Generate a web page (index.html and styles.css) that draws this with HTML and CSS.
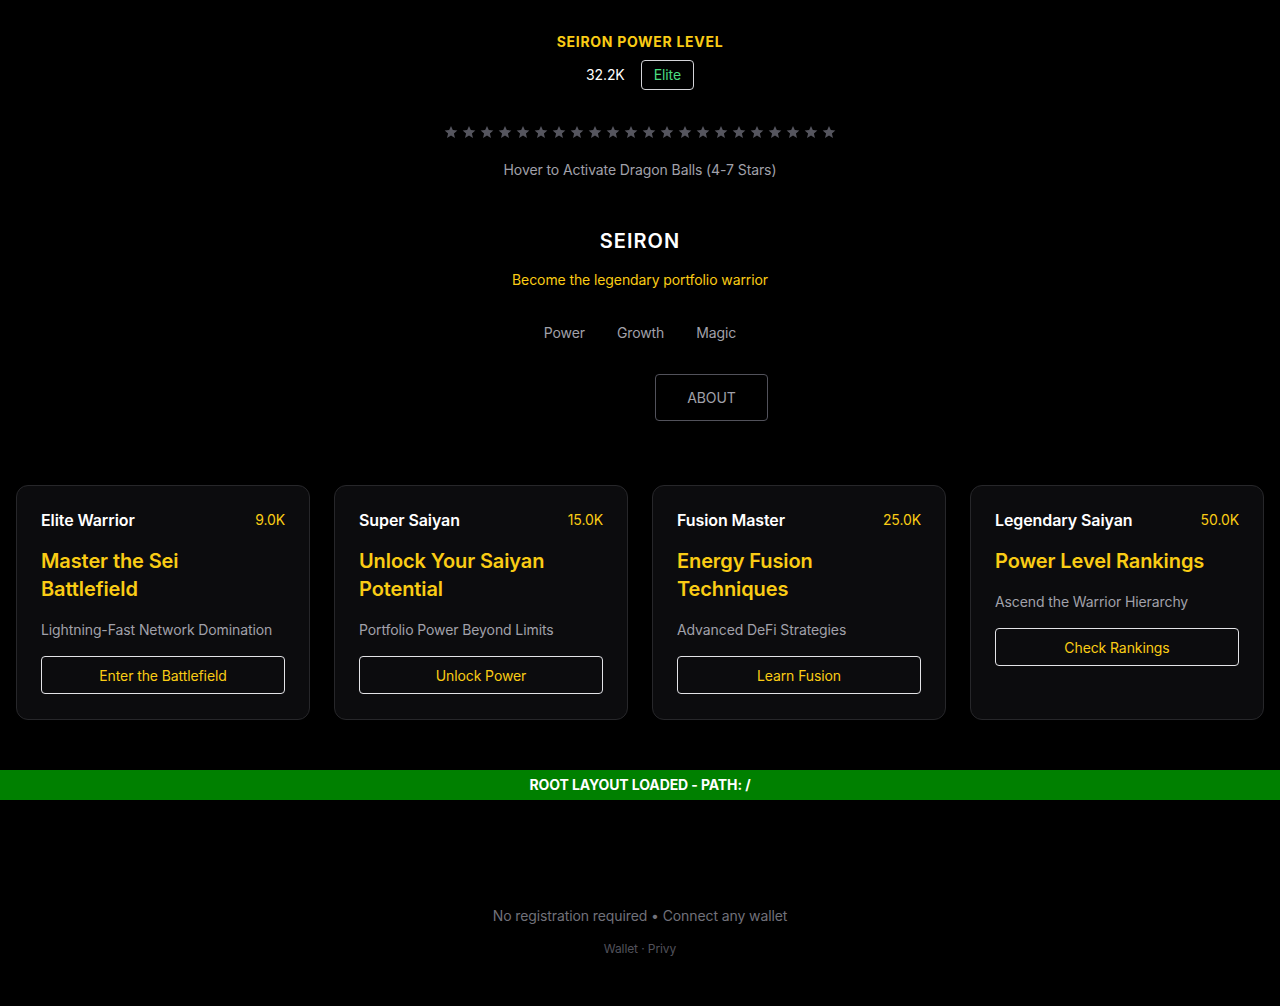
FILE: index.html
```html
<!DOCTYPE html>
<html lang="en">
<head>
<meta charset="utf-8">
<title>Seiron</title>
<link rel="stylesheet" href="styles.css">
</head>
<body>
<main class="page">
  <section class="power">
    <div class="power-label">SEIRON POWER LEVEL</div>
    <div class="power-row">
      <span class="power-value">32.2K</span>
      <span class="badge">Elite</span>
    </div>
    <div class="stars">
      <svg viewBox="0 0 24 24"><path d="M12 1.5l3.1 7.2 7.8.7-5.9 5.2 1.8 7.7L12 18.2l-6.8 4.1 1.8-7.7-5.9-5.2 7.8-.7z"/></svg>
      <svg viewBox="0 0 24 24"><path d="M12 1.5l3.1 7.2 7.8.7-5.9 5.2 1.8 7.7L12 18.2l-6.8 4.1 1.8-7.7-5.9-5.2 7.8-.7z"/></svg>
      <svg viewBox="0 0 24 24"><path d="M12 1.5l3.1 7.2 7.8.7-5.9 5.2 1.8 7.7L12 18.2l-6.8 4.1 1.8-7.7-5.9-5.2 7.8-.7z"/></svg>
      <svg viewBox="0 0 24 24"><path d="M12 1.5l3.1 7.2 7.8.7-5.9 5.2 1.8 7.7L12 18.2l-6.8 4.1 1.8-7.7-5.9-5.2 7.8-.7z"/></svg>
      <svg viewBox="0 0 24 24"><path d="M12 1.5l3.1 7.2 7.8.7-5.9 5.2 1.8 7.7L12 18.2l-6.8 4.1 1.8-7.7-5.9-5.2 7.8-.7z"/></svg>
      <svg viewBox="0 0 24 24"><path d="M12 1.5l3.1 7.2 7.8.7-5.9 5.2 1.8 7.7L12 18.2l-6.8 4.1 1.8-7.7-5.9-5.2 7.8-.7z"/></svg>
      <svg viewBox="0 0 24 24"><path d="M12 1.5l3.1 7.2 7.8.7-5.9 5.2 1.8 7.7L12 18.2l-6.8 4.1 1.8-7.7-5.9-5.2 7.8-.7z"/></svg>
      <svg viewBox="0 0 24 24"><path d="M12 1.5l3.1 7.2 7.8.7-5.9 5.2 1.8 7.7L12 18.2l-6.8 4.1 1.8-7.7-5.9-5.2 7.8-.7z"/></svg>
      <svg viewBox="0 0 24 24"><path d="M12 1.5l3.1 7.2 7.8.7-5.9 5.2 1.8 7.7L12 18.2l-6.8 4.1 1.8-7.7-5.9-5.2 7.8-.7z"/></svg>
      <svg viewBox="0 0 24 24"><path d="M12 1.5l3.1 7.2 7.8.7-5.9 5.2 1.8 7.7L12 18.2l-6.8 4.1 1.8-7.7-5.9-5.2 7.8-.7z"/></svg>
      <svg viewBox="0 0 24 24"><path d="M12 1.5l3.1 7.2 7.8.7-5.9 5.2 1.8 7.7L12 18.2l-6.8 4.1 1.8-7.7-5.9-5.2 7.8-.7z"/></svg>
      <svg viewBox="0 0 24 24"><path d="M12 1.5l3.1 7.2 7.8.7-5.9 5.2 1.8 7.7L12 18.2l-6.8 4.1 1.8-7.7-5.9-5.2 7.8-.7z"/></svg>
      <svg viewBox="0 0 24 24"><path d="M12 1.5l3.1 7.2 7.8.7-5.9 5.2 1.8 7.7L12 18.2l-6.8 4.1 1.8-7.7-5.9-5.2 7.8-.7z"/></svg>
      <svg viewBox="0 0 24 24"><path d="M12 1.5l3.1 7.2 7.8.7-5.9 5.2 1.8 7.7L12 18.2l-6.8 4.1 1.8-7.7-5.9-5.2 7.8-.7z"/></svg>
      <svg viewBox="0 0 24 24"><path d="M12 1.5l3.1 7.2 7.8.7-5.9 5.2 1.8 7.7L12 18.2l-6.8 4.1 1.8-7.7-5.9-5.2 7.8-.7z"/></svg>
      <svg viewBox="0 0 24 24"><path d="M12 1.5l3.1 7.2 7.8.7-5.9 5.2 1.8 7.7L12 18.2l-6.8 4.1 1.8-7.7-5.9-5.2 7.8-.7z"/></svg>
      <svg viewBox="0 0 24 24"><path d="M12 1.5l3.1 7.2 7.8.7-5.9 5.2 1.8 7.7L12 18.2l-6.8 4.1 1.8-7.7-5.9-5.2 7.8-.7z"/></svg>
      <svg viewBox="0 0 24 24"><path d="M12 1.5l3.1 7.2 7.8.7-5.9 5.2 1.8 7.7L12 18.2l-6.8 4.1 1.8-7.7-5.9-5.2 7.8-.7z"/></svg>
      <svg viewBox="0 0 24 24"><path d="M12 1.5l3.1 7.2 7.8.7-5.9 5.2 1.8 7.7L12 18.2l-6.8 4.1 1.8-7.7-5.9-5.2 7.8-.7z"/></svg>
      <svg viewBox="0 0 24 24"><path d="M12 1.5l3.1 7.2 7.8.7-5.9 5.2 1.8 7.7L12 18.2l-6.8 4.1 1.8-7.7-5.9-5.2 7.8-.7z"/></svg>
      <svg viewBox="0 0 24 24"><path d="M12 1.5l3.1 7.2 7.8.7-5.9 5.2 1.8 7.7L12 18.2l-6.8 4.1 1.8-7.7-5.9-5.2 7.8-.7z"/></svg>
      <svg viewBox="0 0 24 24"><path d="M12 1.5l3.1 7.2 7.8.7-5.9 5.2 1.8 7.7L12 18.2l-6.8 4.1 1.8-7.7-5.9-5.2 7.8-.7z"/></svg>
    </div>
    <div class="hint">Hover to Activate Dragon Balls (4-7 Stars)</div>
  </section>

  <section class="hero">
    <h1 class="brand">SEIRON</h1>
    <p class="tagline">Become the legendary portfolio warrior</p>
    <nav class="nav">
      <span>Power</span><span>Growth</span><span>Magic</span>
    </nav>
    <div class="about-row">
      <button class="about">ABOUT</button>
    </div>
  </section>

  <section class="cards">
    <article class="card">
      <div class="card-top"><span class="rank">Elite Warrior</span><span class="level">9.0K</span></div>
      <h2 class="card-title">Master the Sei Battlefield</h2>
      <p class="card-desc">Lightning-Fast Network Domination</p>
      <button class="card-btn">Enter the Battlefield</button>
    </article>
    <article class="card">
      <div class="card-top"><span class="rank">Super Saiyan</span><span class="level">15.0K</span></div>
      <h2 class="card-title">Unlock Your Saiyan Potential</h2>
      <p class="card-desc">Portfolio Power Beyond Limits</p>
      <button class="card-btn">Unlock Power</button>
    </article>
    <article class="card">
      <div class="card-top"><span class="rank">Fusion Master</span><span class="level">25.0K</span></div>
      <h2 class="card-title">Energy Fusion Techniques</h2>
      <p class="card-desc">Advanced DeFi Strategies</p>
      <button class="card-btn">Learn Fusion</button>
    </article>
    <article class="card">
      <div class="card-top"><span class="rank">Legendary Saiyan</span><span class="level">50.0K</span></div>
      <h2 class="card-title">Power Level Rankings</h2>
      <p class="card-desc">Ascend the Warrior Hierarchy</p>
      <button class="card-btn">Check Rankings</button>
    </article>
  </section>

  <div class="banner">ROOT LAYOUT LOADED - PATH: /</div>

  <footer class="footer">
    <p class="footer-main">No registration required • Connect any wallet</p>
    <p class="footer-sub">Wallet · Privy</p>
  </footer>
</main>
</body>
</html>
```

FILE: styles.css
```css
* { box-sizing: border-box; }
html, body { margin: 0; padding: 0; background: #000; }
body {
  font-family: Inter, "Noto Sans", "Liberation Sans", sans-serif;
  color: #fff;
  font-size: 14px;
  line-height: 20px;
  letter-spacing: -0.1px;
}
.page { display: flex; flex-direction: column; min-height: 1006px; }

.power { display: flex; flex-direction: column; align-items: center; padding-top: 32px; }
.power-label { color: #facc15; font-weight: 700; font-size: 14px; letter-spacing: 0.7px; line-height: 20px; }
.power-row { display: flex; align-items: center; gap: 16px; margin-top: 8px; }
.power-value { color: #fff; font-size: 14px; }
.badge {
  color: #4ade80; border: 1px solid #d4d4d8; border-radius: 4px;
  height: 30px; padding: 0 12px; display: flex; align-items: center; font-size: 14px;
}
.stars { display: flex; gap: 4px; margin-top: 35px; height: 14px; }
.stars svg { width: 14px; height: 14px; fill: #55555e; display: block; }
.hint { color: #a1a1aa; margin-top: 21px; }

.hero { display: flex; flex-direction: column; align-items: center; margin-top: 47px; }
.brand { margin: 0; font-size: 20px; line-height: 28px; font-weight: 600; letter-spacing: 1px; }
.tagline { margin: 15px 0 0; color: #facc15; }
.nav { display: flex; gap: 32px; margin-top: 33px; color: #a1a1aa; }
.about-row { display: flex; margin-top: 31px; }
.about {
  margin-left: 143px;
  background: transparent; color: #a1a1aa; font-family: inherit; font-size: 14px; letter-spacing: -0.1px;
  border: 1px solid #52525b; border-radius: 4px; width: 113px; height: 47px; padding: 0;
}

.cards {
  display: grid; grid-template-columns: repeat(4, 1fr); gap: 24px;
  padding: 0 16px; margin-top: 64px;
}
.card {
  background: #0c0c0e; border: 1px solid #27272a; border-radius: 12px;
  padding: 23px 24px 25px; display: flex; flex-direction: column;
}
.card-top { display: flex; justify-content: space-between; align-items: center; }
.rank { font-size: 16px; font-weight: 600; line-height: 22px; color: #fff; }
.level { color: #facc15; font-size: 14px; }
.card-title { margin: 16px 0 0; padding-right: 8px; color: #facc15; font-size: 20px; line-height: 28px; font-weight: 600; }
.card-desc { margin: 17px 0 0; color: #a1a1aa; }
.card-btn {
  margin-top: 16px; height: 38px; background: transparent; color: #facc15;
  border: 1px solid #e4e4e7; border-radius: 4px; font-family: inherit; font-size: 14px; padding: 0; letter-spacing: -0.1px;
}

.banner {
  margin-top: 50px; background: #008000; color: #fff; font-weight: 700;
  text-align: center; height: 30px; line-height: 30px; font-size: 14px;
}

.footer { display: flex; flex-direction: column; align-items: center; margin-top: 106px; }
.footer-main { margin: 0; color: #71717a; }
.footer-sub { margin: 15px 0 0; color: #52525b; font-size: 12px; line-height: 16px; }
```
